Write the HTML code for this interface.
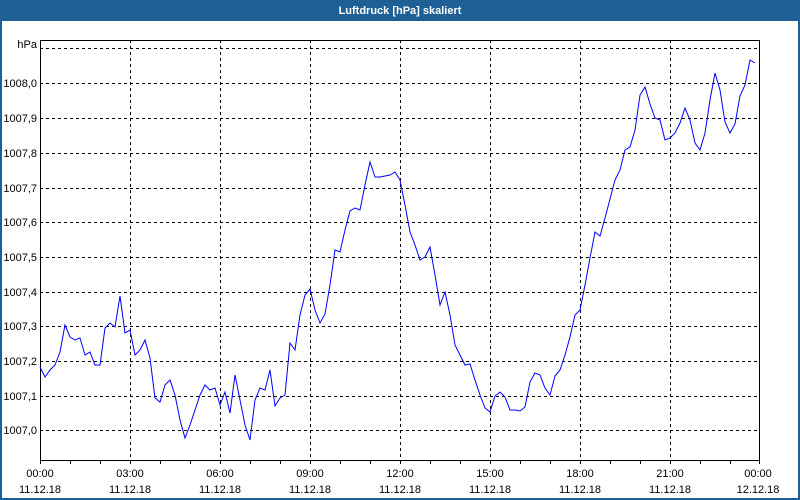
<!DOCTYPE html>
<html><head><style>
html,body{margin:0;padding:0;width:800px;height:500px;overflow:hidden;background:#fff}
</style></head><body>
<svg width="800" height="500" style="position:absolute;left:0;top:0" font-family="'Liberation Sans',sans-serif" font-size="11">
<rect x="0" y="0" width="800" height="500" fill="#fff"/>
<rect x="0" y="0" width="800" height="21" fill="#1e5f96"/>
<rect x="0" y="0" width="2" height="500" fill="#1e5f96"/>
<rect x="798" y="0" width="2" height="500" fill="#1e5f96"/>
<rect x="0" y="498" width="800" height="2" fill="#1e5f96"/>
<text x="400" y="14" text-anchor="middle" fill="#fff" font-weight="bold">Luftdruck [hPa] skaliert</text>
<g stroke="#000" stroke-dasharray="3,3" stroke-width="1">
<line x1="40" y1="48.5" x2="760" y2="48.5"/>
<line x1="40" y1="83.5" x2="760" y2="83.5"/>
<line x1="40" y1="118.5" x2="760" y2="118.5"/>
<line x1="40" y1="153.5" x2="760" y2="153.5"/>
<line x1="40" y1="188.5" x2="760" y2="188.5"/>
<line x1="40" y1="222.5" x2="760" y2="222.5"/>
<line x1="40" y1="257.5" x2="760" y2="257.5"/>
<line x1="40" y1="292.5" x2="760" y2="292.5"/>
<line x1="40" y1="326.5" x2="760" y2="326.5"/>
<line x1="40" y1="361.5" x2="760" y2="361.5"/>
<line x1="40" y1="396.5" x2="760" y2="396.5"/>
<line x1="40" y1="430.5" x2="760" y2="430.5"/>
<line x1="130.5" y1="40" x2="130.5" y2="460"/>
<line x1="220.5" y1="40" x2="220.5" y2="460"/>
<line x1="310.5" y1="40" x2="310.5" y2="460"/>
<line x1="400.5" y1="40" x2="400.5" y2="460"/>
<line x1="490.5" y1="40" x2="490.5" y2="460"/>
<line x1="580.5" y1="40" x2="580.5" y2="460"/>
<line x1="670.5" y1="40" x2="670.5" y2="460"/>
</g>
<rect x="40.5" y="40.5" width="719" height="420" fill="none" stroke="#000"/>
<g stroke="#000">
<path d="M40.5 460v4M70.5 460v4M100.5 460v4M130.5 460v4M160.5 460v4M190.5 460v4M220.5 460v4M250.5 460v4M280.5 460v4M310.5 460v4M340.5 460v4M370.5 460v4M400.5 460v4M430.5 460v4M460.5 460v4M490.5 460v4M520.5 460v4M550.5 460v4M580.5 460v4M610.5 460v4M640.5 460v4M670.5 460v4M700.5 460v4M730.5 460v4M759.5 460v4"/>
</g>
<polyline fill="none" stroke="#0000ff" stroke-width="1" points="40,367 45,377 50,370 55,365 60,352 65,325 70,337 75,340 80,338 85,355 90,352 95,365 100,365 105,328 110,323 115,327 120,296 125,333 130,330 135,355 140,350 145,340 150,358 155,398 160,402 165,385 170,380 175,395 180,420 185,438 190,425 195,410 200,395 205,385 210,390 215,388 220,405 225,392 230,413 235,375 240,400 245,425 250,440 255,400 260,388 265,390 270,370 275,406 280,398 285,395 290,343 295,350 300,315 305,295 310,289 315,310 320,323 325,314 330,285 335,250 340,252 345,230 350,211 355,208 360,210 365,185 370,162 375,177 380,177 385,176 390,175 395,172 400,180 405,205 410,232 415,245 420,260 425,257 430,247 435,275 440,305 445,292 450,315 455,345 460,355 465,365 470,364 475,380 480,395 485,408 490,412 495,396 500,392 505,397 510,410 515,410 520,411 525,407 530,382 535,373 540,375 545,388 550,395 555,376 560,370 565,355 570,337 575,315 580,310 585,285 590,258 595,232 600,236 605,218 610,199 615,180 620,170 625,150 630,147 635,130 640,95 645,87 650,104 655,118 660,120 665,140 670,138 675,133 680,123 685,108 690,120 695,143 700,150 705,133 710,100 715,73 720,90 725,122 730,133 735,124 740,96 745,85 750,60 755,63"/>
<g fill="#000" text-anchor="end">
<text x="37" y="48">hPa</text>
<text x="37" y="87">1008,0</text>
<text x="37" y="122">1007,9</text>
<text x="37" y="157">1007,8</text>
<text x="37" y="192">1007,7</text>
<text x="37" y="226">1007,6</text>
<text x="37" y="261">1007,5</text>
<text x="37" y="296">1007,4</text>
<text x="37" y="330">1007,3</text>
<text x="37" y="365">1007,2</text>
<text x="37" y="400">1007,1</text>
<text x="37" y="434">1007,0</text>
</g>
<g fill="#000" text-anchor="middle">
<text x="40" y="477">00:00</text><text x="40" y="493">11.12.18</text>
<text x="130" y="477">03:00</text><text x="130" y="493">11.12.18</text>
<text x="220" y="477">06:00</text><text x="220" y="493">11.12.18</text>
<text x="310" y="477">09:00</text><text x="310" y="493">11.12.18</text>
<text x="400" y="477">12:00</text><text x="400" y="493">11.12.18</text>
<text x="490" y="477">15:00</text><text x="490" y="493">11.12.18</text>
<text x="580" y="477">18:00</text><text x="580" y="493">11.12.18</text>
<text x="670" y="477">21:00</text><text x="670" y="493">11.12.18</text>
<text x="758" y="477">00:00</text><text x="758" y="493">12.12.18</text>
</g>
</svg>
</body></html>
